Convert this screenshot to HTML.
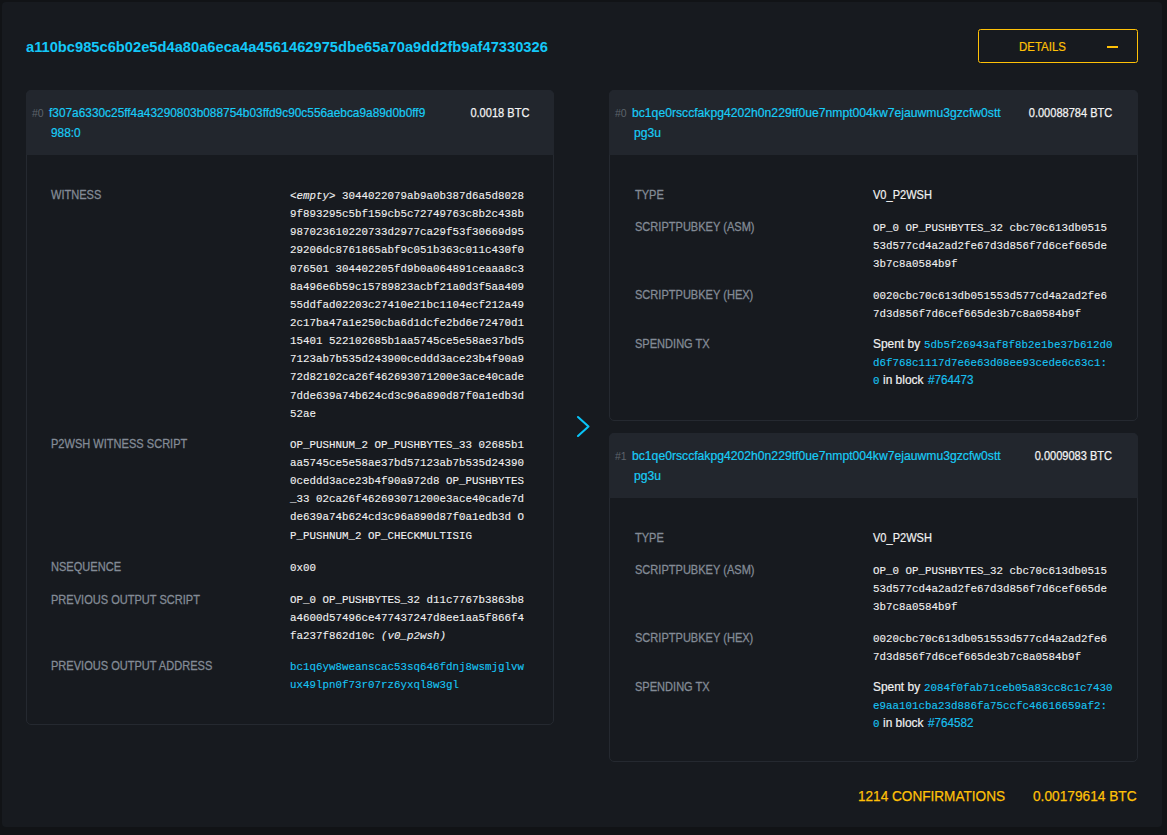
<!DOCTYPE html>
<html><head><meta charset="utf-8">
<style>
html,body{margin:0;padding:0;}
body{width:1167px;height:835px;background:#111316;position:relative;overflow:hidden;font-family:"Liberation Sans",sans-serif;}
#main{position:absolute;left:2px;top:2px;width:1160px;height:825px;background:#171a1f;border-radius:4px;}
.abs{position:absolute;white-space:pre;}
.title{font-weight:bold;font-size:14.7px;line-height:20px;color:#14c8f8;}
.btn{position:absolute;left:978px;top:29px;width:158px;height:32px;border:1px solid #ffc107;border-radius:2.5px;}
.minus{position:absolute;left:1107px;top:46px;width:11px;height:2px;background:#ffc107;}
.dt{font-size:13.6px;line-height:16px;color:#ffc107;-webkit-text-stroke:0.2px currentColor;transform:scaleX(0.845);transform-origin:0 0;}
.card{position:absolute;border:1px solid #252930;border-radius:5px;background:#171a1f;box-sizing:border-box;}
.chead{position:absolute;left:-1px;top:-1px;right:-1px;height:64.5px;background:#22262d;border-radius:5px 5px 0 0;}
.num{font-size:10.5px;color:#5d636b;line-height:16px;}
.s13{font-size:13px;line-height:16px;transform-origin:0 0;}
.hlink{color:#18ccf6;-webkit-text-stroke:0.2px currentColor;}
.hval{color:#f4f4f4;transform-origin:100% 0;-webkit-text-stroke:0.25px currentColor;}
.lbl{color:#838b96;transform:scaleX(0.85);-webkit-text-stroke:0.3px currentColor;}
.mono{font-family:"Liberation Mono",monospace;font-size:11.6px;line-height:18.15px;transform:scaleX(0.934);transform-origin:0 0;color:#f0f0f0;-webkit-text-stroke:0.12px currentColor;}
.mono i{font-style:italic;}
.ml{color:#16c4f4;}
.sv{color:#f2f2f2;transform:scaleX(0.85);-webkit-text-stroke:0.2px currentColor;}
.sl{color:#18c0f0;-webkit-text-stroke:0.15px currentColor;transform:scaleX(0.90);}
.foot{font-size:15.5px;color:#ffc107;-webkit-text-stroke:0.25px currentColor;line-height:18px;transform:scaleX(0.877);transform-origin:0 0;}
.chev{position:absolute;left:570px;top:410px;}
</style></head><body>
<div id="main"></div>
<div class="abs title" style="left:26px;top:36.6px;">a110bc985c6b02e5d4a80a6eca4a4561462975dbe65a70a9dd2fb9af47330326</div>
<div class="btn"></div><div class="minus"></div>
<div class="abs dt" style="left:1019px;top:39.4px;">DETAILS</div>
<div class="card" style="left:26px;top:90px;width:528px;height:635px"><div class="chead"></div></div>
<div class="abs num" style="left:32px;top:105px;">#0</div>
<div class="abs s13 hlink" style="left:48.5px;top:105px;transform:scaleX(0.913)">f307a6330c25ff4a43290803b088754b03ffd9c90c556aebca9a89d0b0ff9</div>
<div class="abs s13 hlink" style="left:50.5px;top:124.69999999999999px;transform:scaleX(0.913)">988:0</div>
<div class="abs s13 hval" style="right:638px;top:105px;transform:scaleX(0.85)">0.0018 BTC</div>
<div class="abs s13 lbl" style="left:50.5px;top:187px;">WITNESS</div>
<div class="abs mono" style="left:290px;top:186.9px;"><i>&lt;empty&gt;</i> 3044022079ab9a0b387d6a5d8028
9f893295c5bf159cb5c72749763c8b2c438b
987023610220733d2977ca29f53f30669d95
29206dc8761865abf9c051b363c011c430f0
076501 304402205fd9b0a064891ceaaa8c3
8a496e6b59c15789823acbf21a0d3f5aa409
55ddfad02203c27410e21bc1104ecf212a49
2c17ba47a1e250cba6d1dcfe2bd6e72470d1
15401 522102685b1aa5745ce5e58ae37bd5
7123ab7b535d243900ceddd3ace23b4f90a9
72d82102ca26f462693071200e3ace40cade
7dde639a74b624cd3c96a890d87f0a1edb3d
52ae</div>
<div class="abs s13 lbl" style="left:50.5px;top:436.4px;">P2WSH WITNESS SCRIPT</div>
<div class="abs mono" style="left:290px;top:435.8px;">OP_PUSHNUM_2 OP_PUSHBYTES_33 02685b1
aa5745ce5e58ae37bd57123ab7b535d24390
0ceddd3ace23b4f90a972d8 OP_PUSHBYTES
_33 02ca26f462693071200e3ace40cade7d
de639a74b624cd3c96a890d87f0a1edb3d O
P_PUSHNUM_2 OP_CHECKMULTISIG</div>
<div class="abs s13 lbl" style="left:50.5px;top:559.3px;">NSEQUENCE</div>
<div class="abs mono" style="left:290px;top:559px;">0x00</div>
<div class="abs s13 lbl" style="left:50.5px;top:591.7px;">PREVIOUS OUTPUT SCRIPT</div>
<div class="abs mono" style="left:290px;top:590.9px;">OP_0 OP_PUSHBYTES_32 d11c7767b3863b8
a4600d57496ce477437247d8ee1aa5f866f4
fa237f862d10c <i>(v0_p2wsh)</i></div>
<div class="abs s13 lbl" style="left:50.5px;top:658.3px;">PREVIOUS OUTPUT ADDRESS</div>
<div class="abs mono" style="left:290px;top:658.2px;"><span class="ml">bc1q6yw8weanscac53sq646fdnj8wsmjglvw
ux49lpn0f73r07rz6yxql8w3gl</span></div>
<div class="card" style="left:609px;top:90px;width:528.5px;height:330.5px"><div class="chead"></div></div>
<div class="abs num" style="left:615px;top:105px;">#0</div>
<div class="abs s13 hlink" style="left:631.5px;top:105px;transform:scaleX(0.936)">bc1qe0rsccfakpg4202h0n229tf0ue7nmpt004kw7ejauwmu3gzcfw0stt</div>
<div class="abs s13 hlink" style="left:633.5px;top:124.69999999999999px;transform:scaleX(0.936)">pg3u</div>
<div class="abs s13 hval" style="right:55px;top:105px;transform:scaleX(0.85)">0.00088784 BTC</div>
<div class="abs s13 lbl" style="left:634.5px;top:187.2px;">TYPE</div>
<div class="abs s13 sv" style="left:873.3px;top:187.2px;">V0_P2WSH</div>
<div class="abs s13 lbl" style="left:634.5px;top:219.4px;">SCRIPTPUBKEY (ASM)</div>
<div class="abs mono" style="left:873.3px;top:218.8px;">OP_0 OP_PUSHBYTES_32 cbc70c613db0515
53d577cd4a2ad2fe67d3d856f7d6cef665de
3b7c8a0584b9f</div>
<div class="abs s13 lbl" style="left:634.5px;top:287px;">SCRIPTPUBKEY (HEX)</div>
<div class="abs mono" style="left:873.3px;top:287px;">0020cbc70c613db051553d577cd4a2ad2fe6
7d3d856f7d6cef665de3b7c8a0584b9f</div>
<div class="abs s13 lbl" style="left:634.5px;top:336px;">SPENDING TX</div>
<div class="abs s13 sv" style="left:873.3px;top:336px;"><span style="display:inline-block;transform:scaleX(1.08);transform-origin:0 0">Spent by</span></div>
<div class="abs mono" style="left:924.3px;top:336px;"><span class="ml">5db5f26943af8f8b2e1be37b612d0</span></div>
<div class="abs mono" style="left:873.3px;top:354.15px;"><span class="ml">d6f768c1117d7e6e63d08ee93cede6c63c1:</span></div>
<div class="abs mono" style="left:873.3px;top:372.3px;"><span class="ml">0</span></div>
<div class="abs s13 sv" style="left:882.5px;top:372.3px;"><span style="display:inline-block;transform:scaleX(1.08);transform-origin:0 0">in block</span></div>
<div class="abs s13 sl" style="left:928.3px;top:372.3px;">#764473</div>
<div class="card" style="left:609px;top:433px;width:528.5px;height:329px"><div class="chead"></div></div>
<div class="abs num" style="left:615px;top:448px;">#1</div>
<div class="abs s13 hlink" style="left:631.5px;top:448px;transform:scaleX(0.936)">bc1qe0rsccfakpg4202h0n229tf0ue7nmpt004kw7ejauwmu3gzcfw0stt</div>
<div class="abs s13 hlink" style="left:633.5px;top:467.7px;transform:scaleX(0.936)">pg3u</div>
<div class="abs s13 hval" style="right:55px;top:448px;transform:scaleX(0.85)">0.0009083 BTC</div>
<div class="abs s13 lbl" style="left:634.5px;top:530.2px;">TYPE</div>
<div class="abs s13 sv" style="left:873.3px;top:530.2px;">V0_P2WSH</div>
<div class="abs s13 lbl" style="left:634.5px;top:562.4px;">SCRIPTPUBKEY (ASM)</div>
<div class="abs mono" style="left:873.3px;top:561.8px;">OP_0 OP_PUSHBYTES_32 cbc70c613db0515
53d577cd4a2ad2fe67d3d856f7d6cef665de
3b7c8a0584b9f</div>
<div class="abs s13 lbl" style="left:634.5px;top:630px;">SCRIPTPUBKEY (HEX)</div>
<div class="abs mono" style="left:873.3px;top:630px;">0020cbc70c613db051553d577cd4a2ad2fe6
7d3d856f7d6cef665de3b7c8a0584b9f</div>
<div class="abs s13 lbl" style="left:634.5px;top:679px;">SPENDING TX</div>
<div class="abs s13 sv" style="left:873.3px;top:679px;"><span style="display:inline-block;transform:scaleX(1.08);transform-origin:0 0">Spent by</span></div>
<div class="abs mono" style="left:924.3px;top:679px;"><span class="ml">2084f0fab71ceb05a83cc8c1c7430</span></div>
<div class="abs mono" style="left:873.3px;top:697.15px;"><span class="ml">e9aa101cba23d886fa75ccfc46616659af2:</span></div>
<div class="abs mono" style="left:873.3px;top:715.3px;"><span class="ml">0</span></div>
<div class="abs s13 sv" style="left:882.5px;top:715.3px;"><span style="display:inline-block;transform:scaleX(1.08);transform-origin:0 0">in block</span></div>
<div class="abs s13 sl" style="left:928.3px;top:715.3px;">#764582</div>
<svg class="chev" width="30" height="36" viewBox="570 410 30 36"><polyline points="578,417 588.5,426.5 578,436" fill="none" stroke="#08c4f8" stroke-width="2.1" stroke-linecap="round" stroke-linejoin="round"/></svg>
<div class="abs foot" style="left:857.5px;top:787px;">1214 CONFIRMATIONS</div>
<div class="abs foot" style="left:1033px;top:787px;transform:scaleX(0.884)">0.00179614 BTC</div>
</body></html>
